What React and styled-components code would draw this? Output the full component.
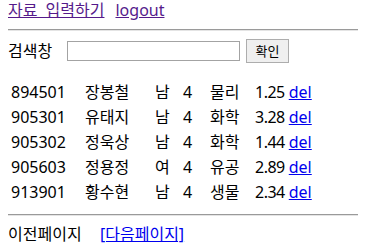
import React from "react";
import styled, { createGlobalStyle } from "styled-components";

const Global = createGlobalStyle`
  html, body { margin: 0; padding: 0; background: #fff; }
  body {
    margin: 0 8px;
    font-family: "Noto Sans", "Noto Sans CJK KR", sans-serif;
    font-size: 16px;
    line-height: 21px;
    color: #000;
  }
`;

const TopBar = styled.div`
  display: flex;
  gap: 11px;
  height: 21px;
  align-items: center;
`;

const Link = styled.a`
  color: ${(p) => (p.$visited ? "#551a8b" : "#0000ee")};
  text-decoration: underline;
  cursor: pointer;
  word-spacing: ${(p) => (p.$wide ? "4px" : "normal")};
`;

const Rule = styled.hr`
  margin: 8px 0;
  height: 0;
  border: 0;
  border-top: 1px solid #9a9a9a;
  border-bottom: 1px solid #e4e4e4;
`;

const SearchForm = styled.form`
  display: flex;
  align-items: center;
  height: 24px;
  margin: 0 0 16px;
`;

const Label = styled.span`
  width: 59px;
  flex: none;
`;

const Input = styled.input`
  box-sizing: border-box;
  width: 173px;
  height: 20px;
  margin: 0 6px 0 0;
  padding: 1px 2px;
  border: 1px solid #a3a3a3;
  background: #fff;
  font: inherit;
`;

const Button = styled.button`
  box-sizing: border-box;
  width: 43px;
  height: 24px;
  padding: 0;
  border: 1px solid #adadad;
  background: #efefef;
  font-family: "Noto Sans CJK KR", sans-serif;
  font-size: 13px;
  line-height: 20px;
  color: #000;
`;

const Table = styled.table`
  border-spacing: 2px;
  border-collapse: separate;
  margin: 0;
`;

const Cell = styled.td`
  padding: 1px;
  width: ${(p) => (p.$w ? `${p.$w}px` : "auto")};
  white-space: nowrap;
  line-height: 21px;
  vertical-align: middle;
  letter-spacing: ${(p) => (p.$tight ? "-0.5px" : "normal")};
`;

const Pager = styled.div`
  display: flex;
  height: 21px;
  align-items: center;
`;

const Prev = styled.span`
  width: 92px;
  flex: none;
`;

const rows = [
  ["894501", "장봉철", "남", "4", "물리", "1.25"],
  ["905301", "유태지", "남", "4", "화학", "3.28"],
  ["905302", "정욱상", "남", "4", "화학", "1.44"],
  ["905603", "정용정", "여", "4", "유공", "2.89"],
  ["913901", "황수현", "남", "4", "생물", "2.34"],
];

const widths = [70, 66, 24, 23, 41, 29];

export default function App() {
  return (
    <>
      <Global />
      <TopBar>
        <Link $visited $wide>자료 입력하기</Link>
        <Link $visited>logout</Link>
      </TopBar>
      <Rule />
      <SearchForm onSubmit={(e) => e.preventDefault()}>
        <Label>검색창</Label>
        <Input type="text" />
        <Button type="submit">확인</Button>
      </SearchForm>
      <Table>
        <tbody>
          {rows.map((r) => (
            <tr key={r[0]}>
              {r.map((c, i) => (
                <Cell key={i} $w={widths[i]} $tight={i === 5}>
                  {c}
                </Cell>
              ))}
              <Cell>
                <Link>del</Link>
              </Cell>
            </tr>
          ))}
        </tbody>
      </Table>
      <Rule />
      <Pager>
        <Prev>이전페이지</Prev>
        <Link>[다음페이지]</Link>
      </Pager>
    </>
  );
}
